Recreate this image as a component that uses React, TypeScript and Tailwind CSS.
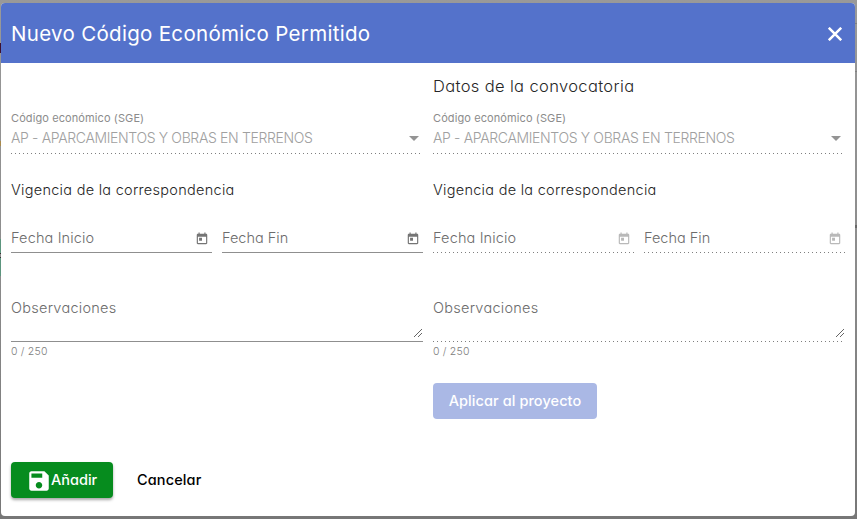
import type { ReactNode } from "react";

function Underline({ disabled }: { disabled: boolean }) {
  return disabled ? (
    <div className="h-px bg-[linear-gradient(to_right,rgba(0,0,0,0.5)_0,rgba(0,0,0,0.5)_33%,transparent_33%)] bg-[length:4px_1px] bg-repeat-x" />
  ) : (
    <div className="h-px bg-[#8f8f8f]" />
  );
}

function CalendarIcon({ disabled }: { disabled: boolean }) {
  return (
    <svg viewBox="0 0 24 24" className={`mr-[3px] size-[14px] ${disabled ? "fill-[#b9b9b9]" : "fill-[#757575]"}`}>
      <path d="M19 3h-1V1h-2v2H8V1H6v2H5c-1.11 0-1.99.9-1.99 2L3 19c0 1.1.89 2 2 2h14c1.1 0 2-.9 2-2V5c0-1.1-.9-2-2-2zm0 16H5V8h14v11zM7 10h5v5H7z" />
    </svg>
  );
}

function DateField({ disabled, children }: { disabled: boolean; children: ReactNode }) {
  return (
    <div className="flex-1">
      <div className="flex h-6 items-start justify-between">
        <span className="h-5 text-[14.5px] leading-5 text-[#6c6c6c]">{children}</span>
        <span className="flex h-5 items-center pt-px">
          <CalendarIcon disabled={disabled} />
        </span>
      </div>
      <Underline disabled={disabled} />
    </div>
  );
}

function Column({ title, disabled }: { title?: string; disabled: boolean }) {
  return (
    <section className="w-[412px]">
      <h2 className="h-5 text-[16.5px] leading-5 tracking-[0.36px] text-[#262626]">
        <span>{title}</span>
      </h2>
      <div className="mt-[14px] h-4 text-[11px] leading-4 font-normal tracking-[0.1px] text-[#8c8c8c]">
        <span>Código económico (SGE)</span>
      </div>
      <div className="mt-0.5 flex h-[25px] items-start justify-between text-[14px] leading-5 text-[#a0a0a0]">
        <span className="tracking-[-0.35px]">AP - APARCAMIENTOS Y OBRAS EN TERRENOS</span>
        <svg viewBox="0 0 10 5" className="mt-2 mr-1 h-[5px] w-[10px] fill-[#949494]">
          <path d="M0 0h10L5 5z" />
        </svg>
      </div>
      <Underline disabled />
      <h3 className="mt-[26px] h-5 text-[14.5px] leading-5 tracking-[0.28px] text-[#262626]">
        <span>Vigencia de la correspondencia</span>
      </h3>
      <div className="mt-7 flex gap-[10px]">
        <DateField disabled={disabled}>
          <span className="tracking-[0.14px]">Fecha Inicio</span>
        </DateField>
        <DateField disabled={disabled}>
          <span>Fecha Fin</span>
        </DateField>
      </div>
      <div className="mt-[45px] flex h-[43px] justify-between text-[14.5px] leading-5 text-[#6c6c6c]">
        <span className="tracking-[0.26px]">Observaciones</span>
        <svg viewBox="0 0 9 9" className="mt-[30px] size-[9px] fill-[#666]" shapeRendering="crispEdges">
          <path d="M0 8h1v1H0zM1 7h1v1H1zM2 6h1v1H2zM3 5h1v1H3zM4 4h1v1H4zM5 3h1v1H5zM6 2h1v1H6zM7 1h1v1H7zM4 8h1v1H4zM5 7h1v1H5zM6 6h1v1H6zM7 5h1v1H7z" />
        </svg>
      </div>
      <Underline disabled={disabled} />
      <div className="mt-0.5 h-4 text-[10.5px] leading-4 tracking-[0.2px] text-[#808080]">
        <span>0 / 250</span>
      </div>
    </section>
  );
}

export default function App() {
  return (
    <main className="flex h-[519px] w-[857px] bg-[linear-gradient(to_bottom,#999_0,#8c8c8c_50%,#777_100%)] font-[Inter,sans-serif] [font-feature-settings:'cv11']">
      <div className="w-px">
        <div className="mt-[43px] h-[10px] bg-[#3d1030]" />
        <div className="mt-[88px] h-[5px] bg-[#a88a4c]" />
        <div className="mt-[93px] h-[14px] bg-[#5c957e]" />
        <div className="h-px bg-[#333]" />
        <div className="mt-[3px] h-px bg-[#333]" />
        <div className="h-[18px] bg-[#5c957e]" />
      </div>
      <div className="mt-[3px] flex h-[513px] w-[854px] flex-col overflow-hidden rounded bg-white">
        <header className="flex h-[60px] shrink-0 items-center justify-between bg-[#5472cb] pr-[13px] pl-[10px] text-white">
          <h1 className="pt-0.5 text-[20.5px] tracking-[0.31px]">
            <span>Nuevo Código Económico Permitido</span>
          </h1>
          <svg viewBox="0 0 14 14" className="mt-0.5 size-[14px] fill-none stroke-white stroke-[2.5]">
            <path d="M.8.8l12.4 12.4M13.2.8L.8 13.2" />
          </svg>
        </header>
        <div className="flex gap-[10px] pt-[13px] pl-[10px] font-light">
          <Column disabled={false} />
          <div>
            <Column title="Datos de la convocatoria" disabled />
            <button className="mt-[23px] flex h-9 w-[164px] items-center justify-center rounded bg-[#aab8e5] text-[14.5px] font-medium tracking-[0.08px] text-white">
              <span>Aplicar al proyecto</span>
            </button>
          </div>
        </div>
        <footer className="mt-[43px] flex items-center pl-[10px] text-[14.5px] font-medium">
          <button className="flex h-9 w-[102px] items-center rounded bg-[#068c1e] pl-[15px] text-white shadow-[0_2px_3px_rgba(0,0,0,0.35)]">
            <svg viewBox="0 0 24 24" className="mt-px -mr-px size-[26px] fill-white">
              <path d="M17 3H5c-1.11 0-2 .9-2 2v14c0 1.1.89 2 2 2h14c1.1 0 2-.9 2-2V7l-4-4zm-5 16c-1.66 0-3-1.34-3-3s1.34-3 3-3 3 1.34 3 3-1.34 3-3 3zm3-10H5V5h10v4z" />
            </svg>
            <span className="pb-px">Añadir</span>
          </button>
          <button className="ml-6 tracking-[0.12px] text-black">
            <span>Cancelar</span>
          </button>
        </footer>
      </div>
      <div className="w-0.5">
        <div className="mt-[23px] h-px bg-[#808080]" />
        <div className="mt-[47px] h-px bg-[#808080]" />
        <div className="mt-[153px] h-[3px] bg-[#686868]" />
      </div>
    </main>
  );
}
